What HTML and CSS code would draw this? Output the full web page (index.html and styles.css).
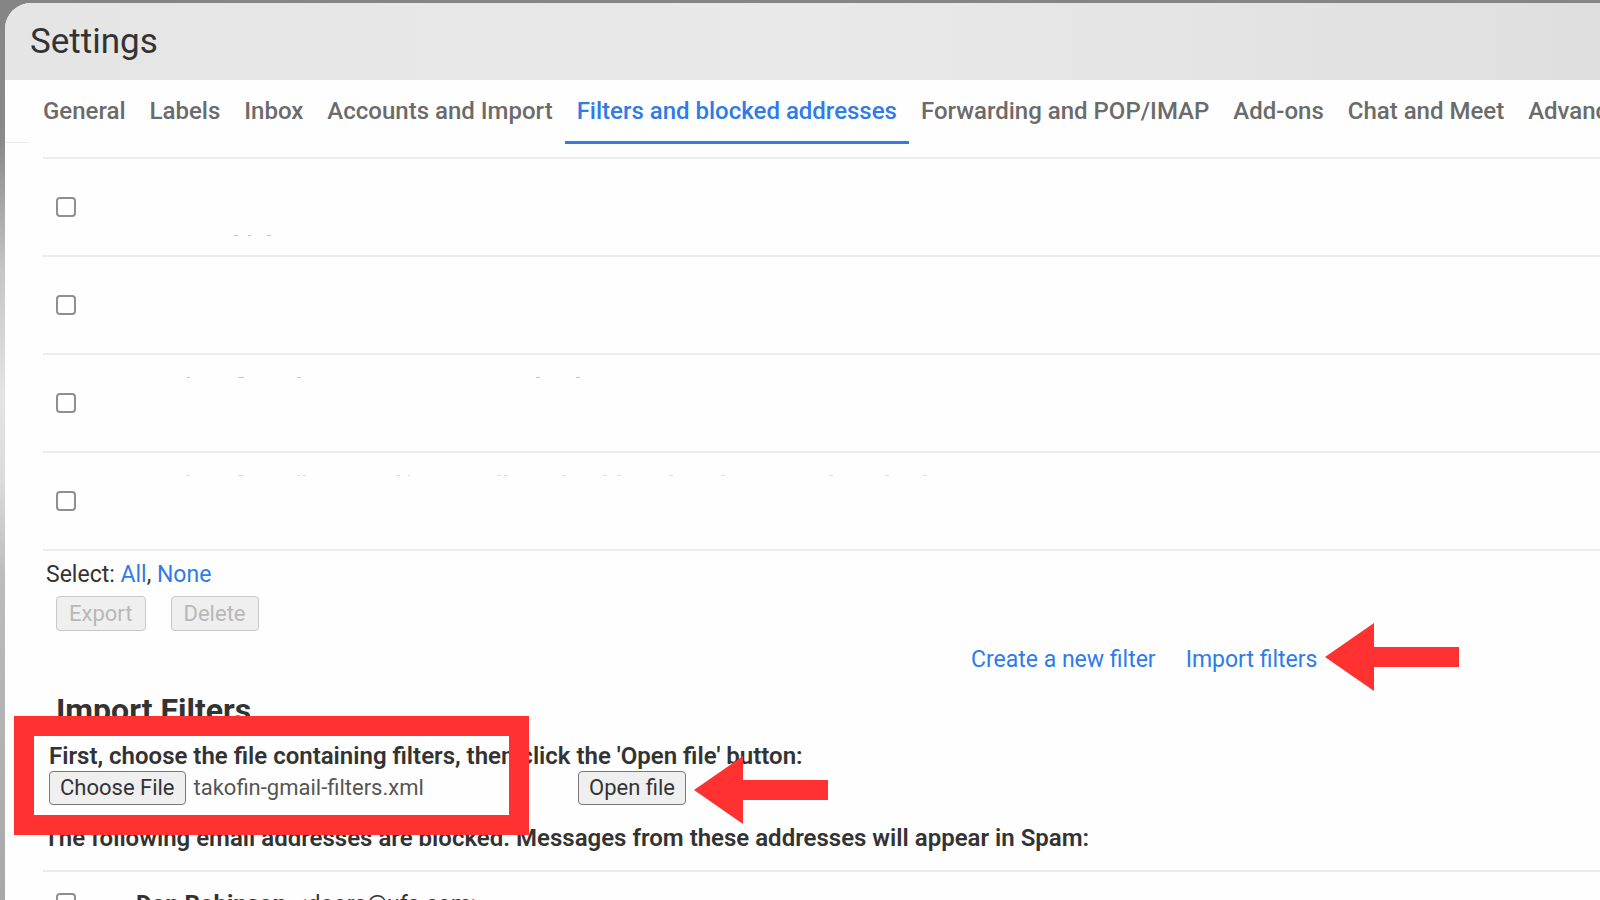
FILE: index.html
```html
<!DOCTYPE html>
<html lang="en">

<head>
    <meta charset="UTF-8">
    <meta name="viewport" content="width=device-width, initial-scale=1.0">
    <title>Settings</title>
    <link rel="stylesheet" href="styles.css">
</head>

<body>

    <main class="panel">
        <header class="panel-header">
            <h1>Settings</h1>
        </header>

        <nav class="tabs">
            <a class="tab" href="#general">General</a>
            <a class="tab" href="#labels">Labels</a>
            <a class="tab" href="#inbox">Inbox</a>
            <a class="tab" href="#accounts">Accounts and Import</a>
            <a class="tab tab-active" href="#filters">Filters and blocked addresses</a>
            <a class="tab" href="#forwarding">Forwarding and POP/IMAP</a>
            <a class="tab" href="#addons">Add-ons</a>
            <a class="tab" href="#chat">Chat and Meet</a>
            <a class="tab" href="#advanced">Advanced</a>
        </nav>

        <section class="content">
            <ul class="rows">
                <li class="row">
                    <input class="check" type="checkbox" aria-label="Filter 1">
                    <svg class="marks" width="900" height="96" viewBox="80 159 900 96">
                        <path d="M234 235.5h4M248 235.5h3M267 235.5h4" />
                    </svg>
                </li>
                <li class="row">
                    <input class="check" type="checkbox" aria-label="Filter 2">
                </li>
                <li class="row">
                    <input class="check" type="checkbox" aria-label="Filter 3">
                    <svg class="marks" width="900" height="96" viewBox="80 355 900 96">
                        <path d="M187 377.5h3M238 377.5h6M297 377.5h4M536 377.5h4M576 377.5h4" />
                    </svg>
                </li>
                <li class="row">
                    <input class="check" type="checkbox" aria-label="Filter 4">
                    <svg class="marks marks-light" width="900" height="96" viewBox="80 453 900 96">
                        <path d="M187 475.5h3M238 475.5h6M297 475.5h3M303 475.5h3M396 475.5h4M408 475.5h2M497 475.5h4M504 475.5h4M562 475.5h4M603 475.5h4M617 475.5h4M669 475.5h4M721 475.5h4M829 475.5h4M885 475.5h4M923 475.5h4" />
                    </svg>
                </li>
            </ul>

            <div class="select">Select: <a href="#all">All</a>, <a href="#none">None</a></div>

            <div class="actions">
                <button class="button" disabled>Export</button>
                <button class="button" disabled>Delete</button>
            </div>

            <div class="links">
                <a href="#create">Create a new filter</a>
                <a class="import-link" href="#import">Import filters
                    <svg class="arrow" width="136" height="68" viewBox="0 0 136 68">
                        <path d="M0 34L49 0V24H134V44H49V68Z" />
                    </svg>
                </a>
            </div>

            <h2>Import Filters</h2>

            <form class="import">
                <label class="bold-text" for="file">First, choose the file containing filters, then click the 'Open file' button:</label>
                <div class="import-row">
                    <input class="file" type="file" id="file">
                    <button class="button" type="button">Open file</button>
                    <svg class="arrow" width="136" height="68" viewBox="0 0 136 68">
                        <path d="M0 34L49 0V24H134V44H49V68Z" />
                    </svg>
                </div>
                <div class="highlight"></div>
            </form>

            <p class="bold-text blocked-title">The following email addresses are blocked. Messages from these addresses will appear in Spam:</p>

            <ul class="rows">
                <li class="row row-blocked">
                    <input class="check" type="checkbox" id="blocked1">
                    <label for="blocked1"><b>Don Robinson</b> &lt;doors@ufs.com&gt;</label>
                </li>
            </ul>
        </section>
    </main>

    <script>
        // Show the chosen file in the file input
        const files = new DataTransfer();
        files.items.add(new File([''], 'takofin-gmail-filters.xml'));
        document.getElementById('file').files = files.files;
    </script>

</body>

</html>
```

FILE: styles.css
```css
* {
    box-sizing: border-box;
}

body {
    font-family: Roboto, Arial, sans-serif;
    font-size: 23px;
    line-height: 28px;
    height: 100vh;
    margin: 0;
    padding: 3px 0 0 5px;
    overflow: hidden;
    color: #333;
    background: linear-gradient(#858585, #8a8a8a 16%, #c5c5c5 30%, #e4e4e4 44%, #dcdcdc 53%, #bcbcbc 64%, #a8a8a8);
}

h1,
h2,
p,
ul {
    margin: 0;
    padding: 0;
}

a {
    color: #2f7be8;
    text-decoration: none;
}

.panel {
    background-color: #fefefe;
    border-radius: 26px 0 0 0;
    height: 100%;
    overflow: hidden;
}

.panel-header {
    background: linear-gradient(90deg, #e5e5e5, #e9e9e9 50%, #dfdfdf);
    padding: 17px 25px 16px;
}

h1 {
    font-size: 35px;
    line-height: 44px;
    font-weight: 400;
}

.tabs {
    display: flex;
    height: 64px;
    padding-left: 26px;
    white-space: nowrap;
    background: linear-gradient(#ececec, #ececec) 0 62px / 24px 1px no-repeat;
}

.tab {
    flex: none;
    padding: 17px 12px 0;
    border-bottom: 3px solid transparent;
    color: #6b6b6b;
    font-size: 24px;
    font-weight: 500;
}

.tab-active {
    color: #2f7be8;
    border-color: #2f7be8;
}

.content {
    padding: 13px 0 0 38px;
}

.rows {
    list-style: none;
    border-top: 2px solid #ececec;
}

.row {
    display: flex;
    align-items: center;
    height: 98px;
    padding-left: 13px;
    border-bottom: 2px solid #ececec;
}

.check {
    appearance: none;
    flex: none;
    width: 20px;
    height: 20px;
    margin: 0;
    border: 2px solid #8f8f8f;
    border-radius: 4px;
}

.marks {
    margin-left: 4px;
    stroke: #c4c4c4;
    fill: none;
}

.marks-light {
    stroke: #dedede;
}

.select {
    padding: 10px 3px 7px;
}

.actions {
    display: flex;
    gap: 25px;
    padding-left: 13px;
}

.button,
.file::file-selector-button {
    font: inherit;
    font-size: 22px;
    line-height: 28px;
    height: 34px;
    margin: 0;
    padding: 0 10px;
    color: #333;
    background-color: #efefef;
    border: 1px solid #777;
    border-radius: 4px;
}

.actions .button {
    height: 35px;
    padding: 0 12px;
    color: #b8b8b8;
    border-color: #c8c8c8;
}

.links {
    display: flex;
    gap: 30px;
    padding: 15px 0 0 928px;
    white-space: nowrap;
}

.import-link,
.import-row {
    position: relative;
}

.arrow {
    position: absolute;
    top: 50%;
    left: 100%;
    margin: -37px 0 0 8px;
    fill: #ff3131;
}

h2 {
    padding: 16px 0 0 13px;
    font-size: 32px;
    line-height: 40px;
}

.import {
    position: relative;
    padding: 12px 0 0 6px;
}

.bold-text {
    display: block;
    font-size: 24px;
    font-weight: 600;
}

.import-row {
    display: flex;
    width: max-content;
    padding-top: 1px;
}

.import-row .arrow {
    margin-top: -32px;
}

.file {
    width: 529px;
    font: inherit;
    font-size: 22px;
    color: #555;
}

.file::file-selector-button {
    margin-right: 8px;
}

/* red frame around the file picker */
.highlight {
    position: absolute;
    top: -14px;
    left: -29px;
    width: 515px;
    height: 119px;
    border: 20px solid #ff3131;
}

.blocked-title {
    padding: 19px 0 18px 1px;
}

.row-blocked {
    align-items: flex-start;
    padding-top: 21px;
}

.row-blocked label {
    margin-left: 60px;
    line-height: 22px;
}

.row-blocked b {
    margin-right: 4px;
    font-size: 24px;
}
```
